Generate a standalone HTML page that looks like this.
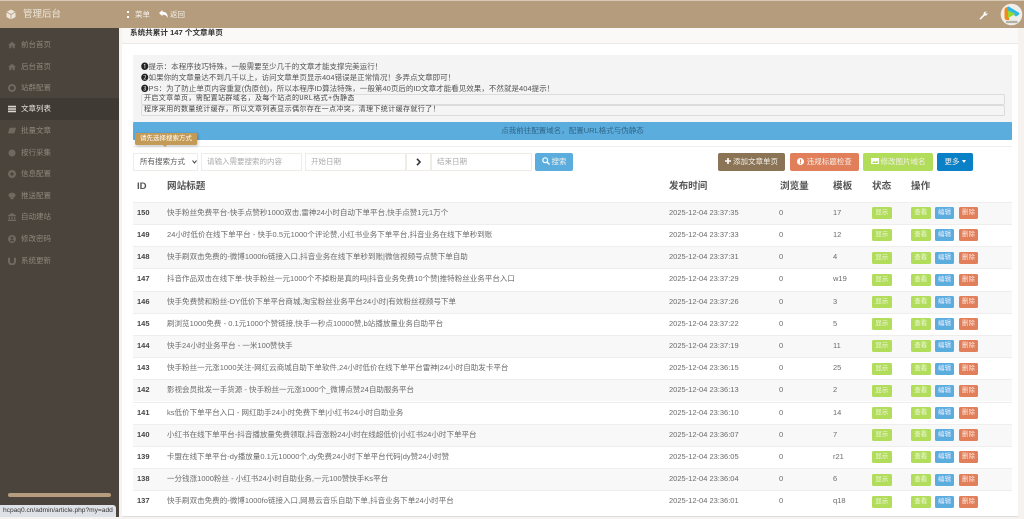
<!DOCTYPE html>
<html lang="zh-CN">
<head>
<meta charset="utf-8">
<title>管理后台</title>
<style>
*{box-sizing:border-box;margin:0;padding:0}
html,body{width:1024px;height:519px;overflow:hidden;background:#f5f2ef}
body{font-family:"Liberation Sans","Noto Sans CJK SC",sans-serif;font-size:7.5px;color:#666;line-height:1}
#wrap{position:absolute;left:0;top:0;width:1024px;height:519px;overflow:hidden;background:#f5f2ef;filter:blur(.3px)}
.a{position:absolute;white-space:nowrap}
#main{left:122px;top:28px;width:896px;height:489px;background:#fff;border-bottom:1px solid #ddd}
#head{left:0;top:0;width:1024px;height:28px;background:#b59c7d;border-top:1px solid #d8c9b6}
#side{left:0;top:28px;width:119px;height:489px;background:#4a443c}
.nav{position:absolute;left:0;width:119px;height:21.6px;line-height:21.6px;color:#8f877b;font-size:7.5px;padding-left:21px}
.nav.on{background:#3f3a33;color:#e8e3dc}
.nav svg{position:absolute;left:7.5px;top:7px;width:8px;height:8px;fill:#6f695f}
.nav.on svg{fill:#ddd8d0}
.row{position:absolute;left:133px;width:879px;height:22.2px;border-top:1px solid #f0eeec;line-height:20px;font-size:7.5px;color:#6a6a6a}
.row.s{background:#f8f8f8}
.row span{position:absolute;top:0;white-space:nowrap}
.row .i{left:4px;font-weight:bold;color:#444}
.row .t{left:34px;letter-spacing:.03px}.row .d{left:536px}.row .v{left:646px}.row .m{left:700px}
.row b{position:absolute;top:4.5px;height:12px;width:19.5px;border-radius:1.5px;color:#eef;font-weight:normal;font-size:6.5px;line-height:12px;text-align:center}
.b1{left:739px}.b2{left:778px}.b3{left:801.7px}.b4{left:825.7px}
.g{background:#b1dd5b;color:#f1f8df!important}.u{background:#5badde}.o{background:#e27f5b;color:#fbe6dc!important}
.th{top:181.5px;font-size:9.6px;font-weight:bold;color:#555}
.inp{top:153px;height:18px;background:#fff;border:1px solid #efebe7;line-height:16px;color:#aaa;padding-left:5px;font-size:7.5px}
.btn{top:153px;height:18px;border-radius:2px;line-height:18px;text-align:center;color:#f4f0ea;font-size:7.5px}
.pre{left:141px;width:864px;height:11px;background:#f5f5f5;border:1px solid #dcdcdc;border-radius:2px;font-family:"Liberation Mono","Noto Sans CJK SC",monospace;font-size:7px;letter-spacing:.4px;line-height:9px;padding-left:2px;color:#444;white-space:nowrap}
.n{left:141px;font-size:7.5px;color:#555;letter-spacing:.04px}
.n i{font-style:normal;color:#222}
</style>
</head>
<body>
<div id="wrap">
<div class="a" id="main"></div>
<div class="a" id="head"></div>
<div class="a" id="side"></div>

<svg class="a" style="left:6px;top:9px" width="10" height="11" viewBox="0 0 10 11"><path d="M5 .5 9.500 3v5L5 10.500.5 8V3z" fill="#eee6da"/><path d="M5 5.500 9.500 3M5 5.500V10.500M5 5.500 .5 3" stroke="#b59c7d" stroke-width=".8" fill="none"/></svg>
<div class="a" style="left:23px;top:9.500px;font-size:9.500px;color:#eee6da">管理后台</div>
<div class="a" style="left:127px;top:11px;width:2px;height:7px;border-top:2px dotted #fff;border-bottom:2px dotted #fff"></div>
<div class="a" style="left:135px;top:11px;font-size:7.500px;color:#f6f1ea">菜单</div>
<svg class="a" style="left:159px;top:10px" width="9" height="8" viewBox="0 0 9 8"><path d="M0 3 3.500 0v1.800C7 1.800 9 4 8.600 8 7.800 5.600 6 4.600 3.500 4.600V6.200z" fill="#fff"/></svg>
<div class="a" style="left:170px;top:11px;font-size:7.500px;color:#f6f1ea">返回</div>
<svg class="a" style="left:979px;top:11px" width="9" height="9" viewBox="0 0 9 9"><path d="M.5 7.600 4.600 3.400C4.200 1.800 5.600.2 7.600.6L6.200 2l.9 1 1.400-1.300C8.800 3.600 7.200 5 5.700 4.500L1.600 8.600z" fill="#fff"/></svg>
<svg class="a" style="left:1000px;top:3px" width="23" height="23" viewBox="0 0 23 23"><circle cx="11.500" cy="11.500" r="10.800" fill="#f1eee9"/><path d="M4.500 7C4.500 5 6 4 8 4h2l-1 13H7c-1.500 0-2.500-1-2.500-2.500z" fill="#f08a1d"/><path d="M7.500 4.200c0-.6.800-1 1.400-.6L18.600 9.500c1 .6 1 1.800 0 2.400L16 13.500 8 8z" fill="#2fb8e6"/><path d="M8 7.500 15.500 11 8 15z" fill="#9ad82c"/><path d="M6 17.800h11.500v2.300H6z" fill="#b3b0aa"/></svg>

<div class="nav" style="top:34px"><svg viewBox="0 0 10 10"><path d="M5 1 0 5h1.500v4h2.600V6.500h1.800V9h2.600V5H10z"/></svg>前台首页</div>
<div class="nav" style="top:55.600px"><svg viewBox="0 0 10 10"><path d="M5 1 0 5h1.500v4h2.600V6.500h1.800V9h2.600V5H10z"/></svg>后台首页</div>
<div class="nav" style="top:77.200px"><svg viewBox="0 0 10 10"><path d="M5 0a5 5 0 1 0 0 10A5 5 0 0 0 5 0zm0 7.500a2.500 2.500 0 1 1 0-5 2.500 2.500 0 0 1 0 5z"/></svg>站群配置</div>
<div class="nav on" style="top:98.400px"><svg viewBox="0 0 10 10"><path d="M0 1h10v2H0zM0 4h10v2H0zM0 7h10v2H0z"/></svg>文章列表</div>
<div class="nav" style="top:120px"><svg viewBox="0 0 10 10"><path d="M2 1h8L8 8H0z"/></svg>批量文章</div>
<div class="nav" style="top:141.600px"><svg viewBox="0 0 10 10"><circle cx="5" cy="5" r="4.400"/></svg>按行采集</div>
<div class="nav" style="top:163.200px"><svg viewBox="0 0 10 10"><path d="M5 0a5 5 0 1 0 0 10A5 5 0 0 0 5 0zm0 7a2 2 0 1 1 0-4 2 2 0 0 1 0 4z"/></svg>信息配置</div>
<div class="nav" style="top:184.800px"><svg viewBox="0 0 10 10"><path d="M5 1c3 0 4.500 1.500 4.500 3.200 0 1.400-1.200 2.300-2.500 2.500V9H3V6.700C1.700 6.500.5 5.600.5 4.200.5 2.500 2 1 5 1z"/></svg>推送配置</div>
<div class="nav" style="top:206.400px"><svg viewBox="0 0 10 10"><path d="M5 0 10 3v1H0V3zM1 5h1.500v3H1zM4.200 5h1.600v3H4.200zM7.500 5H9v3H7.500zM0 8.500h10V10H0z"/></svg>自动建站</div>
<div class="nav" style="top:228px"><svg viewBox="0 0 10 10"><path d="M5 0a5 5 0 1 0 0 10A5 5 0 0 0 5 0zm0 2a1.800 1.800 0 1 1 0 3.600A1.800 1.800 0 0 1 5 2zM2 8c.5-1.500 1.700-2 3-2s2.500.5 3 2z"/></svg>修改密码</div>
<div class="nav" style="top:249.600px"><svg viewBox="0 0 10 10"><path d="M0 1h2.500v4.500a2.500 2.500 0 0 0 5 0V1H10v4.500a5 5 0 0 1-10 0z"/></svg>系统更新</div>

<div class="a" style="left:8px;top:493px;width:103px;height:4px;border-radius:2px;background:#b59c7d"></div>
<div class="a" style="left:0;top:505px;width:116px;height:12px;background:#dee1e6;border-radius:0 3px 0 0;color:#333;font-size:6.600px;line-height:12px;padding-left:3px">hcpaq0.cn/admin/article.php?my=add</div>

<div class="a" style="left:122px;top:28px;width:896px;height:16px;background:#fbf9f7;border-bottom:1px solid #eee8e2"></div>
<div class="a" style="left:130px;top:29px;font-size:7.600px;font-weight:bold;color:#333;line-height:8px">系统共累计 147 个文章单页</div>

<div class="a" style="left:133px;top:55px;width:879px;height:68px;background:#f4f4f4"></div>
<div class="a n" style="top:63px"><i>❶</i>提示：本程序技巧特殊，一般需要至少几千的文章才能支撑完美运行！</div>
<div class="a n" style="top:74px"><i>❷</i>如果你的文章量达不到几千以上，访问文章单页显示404错误是正常情况！多弄点文章即可！</div>
<div class="a n" style="top:85px"><i>❸</i>PS：为了防止单页内容重复(伪原创)，所以本程序ID算法特殊，一般第40页后的ID文章才能看见效果，不然就是404提示！</div>
<div class="a pre" style="top:94px">开启文章单页，需配置站群域名，及每个站点的URL格式+伪静态</div>
<div class="a pre" style="top:105px">程序采用的数量统计缓存，所以文章列表显示偶尔存在一点冲突，清理下统计缓存就行了！</div>
<div class="a" style="left:133px;top:122px;width:879px;height:18px;background:#5badde;border-radius:1px;text-align:center;line-height:18px;color:#2f6485;font-size:7.500px">点我前往配置域名，配置URL格式与伪静态</div>
<div class="a" style="left:133px;top:146px;width:879px;height:1px;background:#eee"></div>

<div class="a" style="left:135px;top:133px;width:62px;height:12px;background:#c39a56;border-radius:1.500px;color:#fff;font-size:6.500px;line-height:12px;text-align:center;box-shadow:1px 1px 3px rgba(0,0,0,.25)">请先选择搜索方式</div>
<div class="a" style="left:163px;top:145px;border:2px solid transparent;border-top-color:#c39a56"></div>

<div class="a inp" style="left:133px;width:65px;color:#555;padding-left:6px">所有搜索方式</div>
<svg class="a" style="left:192px;top:160px" width="5" height="4" viewBox="0 0 5 4"><path d="M.5.5 2.500 3 4.500.5" stroke="#333" fill="none"/></svg>
<div class="a inp" style="left:201px;width:101px">请输入需要搜索的内容</div>
<div class="a inp" style="left:305px;width:101px">开始日期</div>
<div class="a inp" style="left:406px;width:25px;padding:0"></div>
<svg class="a" style="left:416px;top:158px" width="5" height="8" viewBox="0 0 5 8"><path d="M1 .8 4 4 1 7.200" stroke="#333" stroke-width="1.600" fill="none"/></svg>
<div class="a inp" style="left:431px;width:101px">结束日期</div>
<div class="a btn" style="left:535px;width:38px;background:#5badde"><svg width="8" height="8" viewBox="0 0 8 8" style="vertical-align:-1px;margin-right:2px"><circle cx="3.200" cy="3.200" r="2.400" fill="none" stroke="#fff" stroke-width="1.200"/><path d="M5 5 7.500 7.500" stroke="#fff" stroke-width="1.400"/></svg>搜索</div>

<div class="a btn" style="left:718px;width:67px;background:#8b7355"><svg width="6" height="6" viewBox="0 0 6 6" style="margin-right:2px"><path d="M2.200 0h1.600v2.200H6v1.600H3.800V6H2.200V3.800H0V2.200h2.200z" fill="#fff"/></svg>添加文章单页</div>
<div class="a btn" style="left:790px;width:69px;background:#e27f5b"><svg width="7" height="7" viewBox="0 0 7 7" style="vertical-align:-.5px;margin-right:2.500px"><circle cx="3.500" cy="3.500" r="3.500" fill="#fff"/><path d="M3 1.400h1v2.800H3zM3 4.800h1v1H3z" fill="#e27f5b"/></svg>违规标题检查</div>
<div class="a btn" style="left:863px;width:70px;background:#b1dd5b"><svg width="8" height="6" viewBox="0 0 8 6" style="margin-right:2px"><path d="M0 0h8v6H0z" fill="#fff"/><path d="M1 5 3 3l1.500 1L6 2.500 7 4v1z" fill="#b1dd5b"/></svg>修改图片域名</div>
<div class="a btn" style="left:937px;width:36px;background:#0a80c6">更多 <svg width="4" height="3" viewBox="0 0 4 3" style="vertical-align:1px"><path d="M0 0h4L2 3z" fill="#fff"/></svg></div>

<div class="a th" style="left:137px">ID</div>
<div class="a th" style="left:167px">网站标题</div>
<div class="a th" style="left:669px">发布时间</div>
<div class="a th" style="left:780px">浏览量</div>
<div class="a th" style="left:833px">模板</div>
<div class="a th" style="left:872px">状态</div>
<div class="a th" style="left:911px">操作</div>

<div class="row s" style="top:201.700px"><span class="i">150</span><span class="t">快手粉丝免费平台-快手点赞秒1000双击,雷神24小时自动下单平台,快手点赞1元1万个</span><span class="d">2025-12-04 23:37:35</span><span class="v">0</span><span class="m">17</span><b class="g b1">显示</b><b class="g b2">查看</b><b class="u b3">编辑</b><b class="o b4">删除</b></div>
<div class="row" style="top:223.900px"><span class="i">149</span><span class="t">24小时低价在线下单平台 - 快手0.5元1000个评论赞,小红书业务下单平台,抖音业务在线下单秒到账</span><span class="d">2025-12-04 23:37:33</span><span class="v">0</span><span class="m">12</span><b class="g b1">显示</b><b class="g b2">查看</b><b class="u b3">编辑</b><b class="o b4">删除</b></div>
<div class="row s" style="top:246.100px"><span class="i">148</span><span class="t">快手刷双击免费的-微博1000fo链接入口,抖音业务在线下单秒到账|微信视频号点赞下单自助</span><span class="d">2025-12-04 23:37:31</span><span class="v">0</span><span class="m">4</span><b class="g b1">显示</b><b class="g b2">查看</b><b class="u b3">编辑</b><b class="o b4">删除</b></div>
<div class="row" style="top:268.300px"><span class="i">147</span><span class="t">抖音作品双击在线下单-快手粉丝一元1000个不掉粉是真的吗|抖音业务免费10个赞|推特粉丝业务平台入口</span><span class="d">2025-12-04 23:37:29</span><span class="v">0</span><span class="m">w19</span><b class="g b1">显示</b><b class="g b2">查看</b><b class="u b3">编辑</b><b class="o b4">删除</b></div>
<div class="row s" style="top:290.500px"><span class="i">146</span><span class="t">快手免费赞和粉丝-DY低价下单平台商城,淘宝粉丝业务平台24小时|有效粉丝视频号下单</span><span class="d">2025-12-04 23:37:26</span><span class="v">0</span><span class="m">3</span><b class="g b1">显示</b><b class="g b2">查看</b><b class="u b3">编辑</b><b class="o b4">删除</b></div>
<div class="row" style="top:312.700px"><span class="i">145</span><span class="t">刷浏览1000免费 - 0.1元1000个赞链接,快手一秒点10000赞,b站播放量业务自助平台</span><span class="d">2025-12-04 23:37:22</span><span class="v">0</span><span class="m">5</span><b class="g b1">显示</b><b class="g b2">查看</b><b class="u b3">编辑</b><b class="o b4">删除</b></div>
<div class="row s" style="top:334.900px"><span class="i">144</span><span class="t">快手24小时业务平台 - 一米100赞快手</span><span class="d">2025-12-04 23:37:19</span><span class="v">0</span><span class="m">11</span><b class="g b1">显示</b><b class="g b2">查看</b><b class="u b3">编辑</b><b class="o b4">删除</b></div>
<div class="row" style="top:357.100px"><span class="i">143</span><span class="t">快手粉丝一元涨1000关注-网红云商城自助下单软件,24小时低价在线下单平台雷神|24小时自助发卡平台</span><span class="d">2025-12-04 23:36:15</span><span class="v">0</span><span class="m">25</span><b class="g b1">显示</b><b class="g b2">查看</b><b class="u b3">编辑</b><b class="o b4">删除</b></div>
<div class="row s" style="top:379.300px"><span class="i">142</span><span class="t">影视会员批发一手货源 - 快手粉丝一元涨1000个_微博点赞24自助服务平台</span><span class="d">2025-12-04 23:36:13</span><span class="v">0</span><span class="m">2</span><b class="g b1">显示</b><b class="g b2">查看</b><b class="u b3">编辑</b><b class="o b4">删除</b></div>
<div class="row" style="top:401.500px"><span class="i">141</span><span class="t">ks低价下单平台入口 - 网红助手24小时免费下单|小红书24小时自助业务</span><span class="d">2025-12-04 23:36:10</span><span class="v">0</span><span class="m">14</span><b class="g b1">显示</b><b class="g b2">查看</b><b class="u b3">编辑</b><b class="o b4">删除</b></div>
<div class="row s" style="top:423.700px"><span class="i">140</span><span class="t">小红书在线下单平台-抖音播放量免费领取,抖音涨粉24小时在线超低价|小红书24小时下单平台</span><span class="d">2025-12-04 23:36:07</span><span class="v">0</span><span class="m">7</span><b class="g b1">显示</b><b class="g b2">查看</b><b class="u b3">编辑</b><b class="o b4">删除</b></div>
<div class="row" style="top:445.900px"><span class="i">139</span><span class="t">卡盟在线下单平台-dy播放量0.1元10000个,dy免费24小时下单平台代码|dy赞24小时赞</span><span class="d">2025-12-04 23:36:05</span><span class="v">0</span><span class="m">r21</span><b class="g b1">显示</b><b class="g b2">查看</b><b class="u b3">编辑</b><b class="o b4">删除</b></div>
<div class="row s" style="top:468.100px"><span class="i">138</span><span class="t">一分钱涨1000粉丝 - 小红书24小时自助业务,一元100赞快手Ks平台</span><span class="d">2025-12-04 23:36:04</span><span class="v">0</span><span class="m">6</span><b class="g b1">显示</b><b class="g b2">查看</b><b class="u b3">编辑</b><b class="o b4">删除</b></div>
<div class="row" style="top:490.300px"><span class="i">137</span><span class="t">快手刷双击免费的-微博1000fo链接入口,网易云音乐自助下单,抖音业务下单24小时平台</span><span class="d">2025-12-04 23:36:01</span><span class="v">0</span><span class="m">q18</span><b class="g b1">显示</b><b class="g b2">查看</b><b class="u b3">编辑</b><b class="o b4">删除</b></div>
</div>
</body>
</html>
